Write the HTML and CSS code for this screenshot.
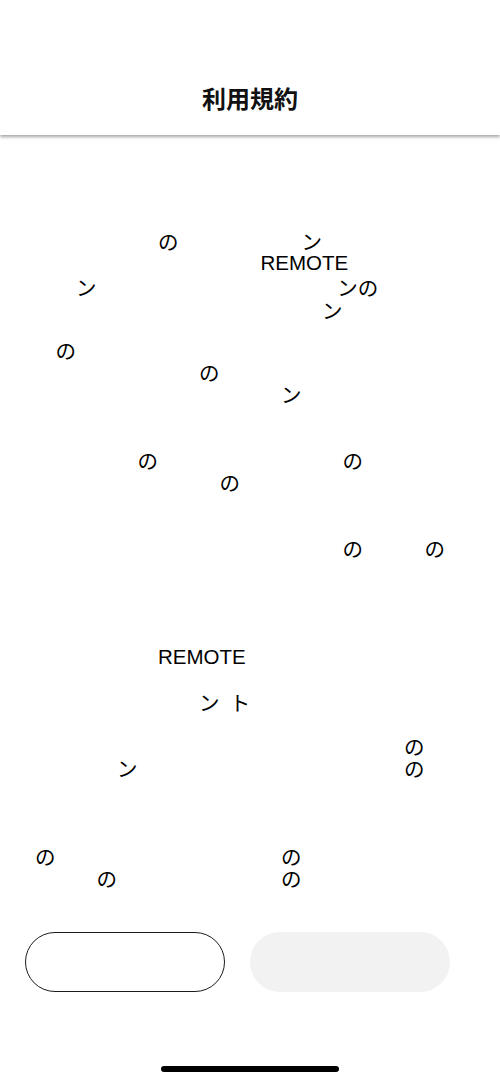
FILE: index.html
```html
<!DOCTYPE html>
<html lang="ja">
<head>
<meta charset="utf-8">
<title>利用規約</title>
<link rel="stylesheet" href="styles.css">
</head>
<body>
<div class="screen">
  <header class="topbar">
    <h1 class="title">利用規約</h1>
  </header>
  <main class="content">
    <div class="terms">
      <p class="para para-loose">　　　　　　　の　　　　　　ン<br>　　　　　　　　　　　　<span class="latin">REMOTE</span><br>　　　ン　　　　　　　　　　　&#8194;&#8197;ンの<br>　　　　　　　　　　　　　　　ン</p>
      <p class="para gap-after-loose">　　の<br>　　　　　　　　　の<br>　　　　　　　　　　　　　ン</p>
      <p class="para gap-2">　　　　　　の　　　　　　　　　の<br>　　　　　　　　　　の</p>
      <p class="para gap-2">　　　　　　　　　　　　　　　　の　　　の</p>
      <p class="para gap-4">　　　　　　　<span class="latin">REMOTE</span></p>
      <p class="para gap-1">　　　　　　　　　ン&#8194;ト</p>
      <p class="para gap-1">　　　　　　　　　　　　　　　　　　　の<br>　　　　　ン　　　　　　　　　　　　　の</p>
      <p class="para gap-3">　の　　　　　　　　　　　の<br>　　　　の　　　　　　　　の</p>
    </div>
  </main>
  <footer class="actions">
    <button class="btn btn-outline" type="button"></button>
    <button class="btn btn-filled" type="button"></button>
  </footer>
  <div class="home">
    <span class="home-bar"></span>
  </div>
</div>
</body>
</html>
```

FILE: styles.css
```css
* {
  box-sizing: border-box;
}

html, body {
  margin: 0;
  padding: 0;
  background: #ffffff;
}

body {
  font-family: "Liberation Sans", "Noto Sans CJK JP", sans-serif;
  color: #000000;
}

.screen {
  height: 1082px;
  display: flex;
  flex-direction: column;
  overflow: hidden;
}

.topbar {
  position: relative;
  z-index: 2;
  height: 135px;
  padding-top: 60px;
  display: flex;
  align-items: center;
  justify-content: center;
  background: #ffffff;
  box-shadow: 0 2px 3px rgba(0, 0, 0, 0.35);
}

.title {
  margin: 0;
  font-family: "Noto Sans CJK JP", sans-serif;
  font-size: 24px;
  font-weight: 700;
  line-height: 1;
  color: #111111;
}

.content {
  flex: 1;
  overflow: hidden;
  padding: 96px 0 0 14.5px;
}

.terms {
  font-size: 20.5px;
  line-height: 22px;
  white-space: nowrap;
}

.para {
  margin: 0;
}

.para-loose {
  line-height: 23px;
}

.latin {
  line-height: 0;
  vertical-align: 3px;
}

.gap-after-loose { margin-top: 18px; }
.gap-1 { margin-top: 22px; }
.gap-2 { margin-top: 44px; }
.gap-3 { margin-top: 66px; }
.gap-4 { margin-top: 88px; }

.actions {
  display: flex;
  gap: 25px;
  padding: 0 50px 0 25px;
}

.btn {
  width: 200px;
  height: 60px;
  border-radius: 30px;
  padding: 0;
  margin: 0;
  font: inherit;
}

.btn-outline {
  background: #ffffff;
  border: 1px solid #1a1a1a;
}

.btn-filled {
  background: #f2f2f2;
  border: none;
}

.home {
  height: 90px;
  padding-top: 74px;
  display: flex;
  justify-content: center;
}

.home-bar {
  width: 178px;
  height: 6px;
  border-radius: 3px;
  background: #000000;
}
```
